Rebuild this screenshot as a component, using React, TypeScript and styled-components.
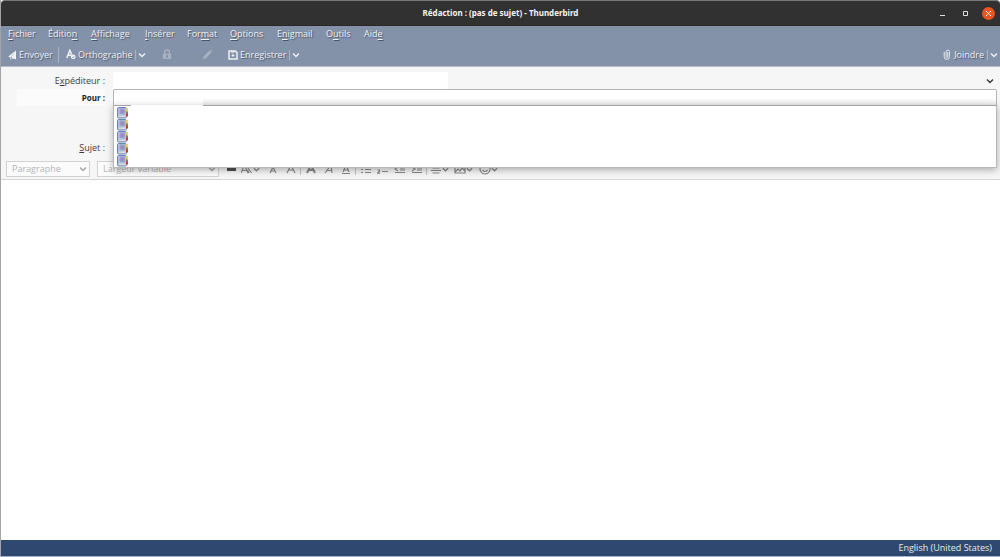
import React from "react";
import styled, { createGlobalStyle, css } from "styled-components";

const Global = createGlobalStyle`
  *, *::before, *::after { box-sizing: border-box; }
  body { margin: 0; background: #fff; }
  body, button, input, select, textarea {
    font-family: "Open Sans", "Noto Sans", sans-serif;
    font-size: 9px;
    line-height: 12px;
  }
  button { border: 0; padding: 0; background: none; color: inherit; }
  svg { display: block; flex: none; }
`;

const Window = styled.div`
  display: flex;
  flex-direction: column;
  min-height: 100vh;
  border-left: 1px solid #a4a4a8;
  border-bottom: 1px solid #a9b4c2;
  background: #fff;
`;

const TitleBar = styled.header`
  display: grid;
  grid-template-columns: 1fr auto 1fr;
  align-items: center;
  height: 26px;
  border-top: 1px solid #777775;
  border-bottom: 1px solid #292826;
  border-radius: 4px 4px 0 0;
  background: #323131;
  color: #f4f4f2;
`;

const Title = styled.h1`
  grid-column: 2;
  margin: 0;
  font-family: "Noto Sans", sans-serif;
  font-size: 8px;
  line-height: 12px;
  font-weight: 700;
`;

const WindowButtons = styled.div`
  display: flex;
  justify-content: flex-end;
  align-items: center;
  gap: 10px;
  padding-right: 5px;
`;

const WindowButton = styled.button<{ $close?: boolean }>`
  display: grid;
  place-items: center;
  width: 13px;
  height: 13px;
  border-radius: 50%;
  color: #dedede;
  ${(p) => p.$close && css`background: #e95420; color: #fff;`}
`;

const Chrome = styled.div`
  height: 41px;
  border-bottom: 1px solid #b9bcc4;
  background: #8391a9;
  color: #f0f1f4;
  text-shadow: 1px 1px 1px #4b5567;
`;

const MenuBar = styled.nav`
  display: flex;
  gap: 14px;
  height: 16px;
  padding-left: 7px;
`;

const MenuItem = styled.button<{ $width: number }>`
  width: ${(p) => p.$width}px;
  white-space: nowrap;
  text-align: left;
  text-shadow: inherit;
  u { text-underline-offset: 2px; }
`;

const ToolBar = styled.div`
  display: flex;
  align-items: center;
  height: 25px;
  padding: 0 2px 0 7px;
`;

const ToolButton = styled.button<{ $width?: number }>`
  display: flex;
  align-items: center;
  gap: 2px;
  height: 16px;
  width: ${(p) => (p.$width ? p.$width + "px" : "auto")};
  white-space: nowrap;
  text-shadow: inherit;
`;

const FadedTool = styled(ToolButton)`
  justify-content: center;
  color: #a9b2c2;
`;

const Divider = styled.span<{ $tall?: boolean }>`
  width: 1px;
  height: ${(p) => (p.$tall ? 16 : 10)}px;
  margin: 0 ${(p) => (p.$tall ? 7 : 2)}px 0 3px;
  background: #a9b3c4;
`;

const Spacer = styled.span`flex: 1;`;

const Headers = styled.form`
  display: grid;
  grid-template-columns: 104px 1fr;
  grid-template-rows: 17px 17px 33px 17px;
  column-gap: 8px;
  padding: 5px 3px 3px 0;
  background: #f6f6f6;
  color: #3c3c3c;
`;

const Label = styled.label<{ $active?: boolean }>`
  justify-self: end;
  display: flex;
  align-items: center;
  justify-content: flex-end;
  width: 88px;
  white-space: pre;
  ${(p) => p.$active && css`
    background: #fbfbfb;
    color: #222;
    font-size: 8px;
    font-weight: 700;
  `}
`;

const Sender = styled.div`
  display: flex;
  align-items: center;
  padding-right: 3px;
`;

const SenderSelect = styled.select`
  appearance: none;
  flex: none;
  width: 38%;
  height: 17px;
  border: 0;
  border-radius: 0;
  background: #fff;
`;

const Recipient = styled.div`
  position: relative;
  display: flex;
`;

const RecipientInput = styled.input`
  width: 100%;
  height: 17px;
  border: 1px solid #b4b4b4;
  border-radius: 2px;
  background: linear-gradient(#fff 50%, #ececec);
  outline: none;
`;

const Entered = styled.span`
  position: absolute;
  top: 3px;
  left: 1px;
  width: 89px;
  height: 13px;
  background: #fff;
`;

const Suggestions = styled.ul`
  position: absolute;
  z-index: 2;
  top: 16px;
  left: 0;
  right: 0;
  margin: 0;
  padding: 1px 3px 0;
  list-style: none;
  border: 1px solid #b8b8b8;
  border-top-color: #a4a4a4;
  background: #fff;
  box-shadow: 0 2px 7px rgba(0, 0, 0, 0.3);
  &::before {
    content: "";
    position: absolute;
    top: -1px;
    left: 17px;
    width: 72px;
    height: 1px;
    background: #fff;
  }
`;

const Suggestion = styled.li`
  height: 12px;
`;

const SubjectInput = styled.input`
  height: 17px;
  border: 1px solid #ccc;
  background: #fff;
`;

const FormatBar = styled.div`
  display: flex;
  align-items: center;
  height: 21px;
  padding-left: 5px;
  border-bottom: 1px solid #d6d6d6;
  background: #f6f6f6;
`;

const Picker = styled.div<{ $width: number }>`
  position: relative;
  display: flex;
  align-items: center;
  width: ${(p) => p.$width}px;
  margin-right: 7px;
  color: #a5a5a5;
  > svg { position: absolute; right: 3px; }
`;

const PickerSelect = styled.select`
  appearance: none;
  width: 100%;
  height: 16px;
  padding: 0 5px;
  border: 1px solid #d2d2d2;
  background: #fbfbfb;
  color: #b4b4b4;
  opacity: 1;
`;

const FormatButton = styled.button<{ $width: number }>`
  display: flex;
  justify-content: center;
  align-items: center;
  width: ${(p) => p.$width}px;
  height: 16px;
  color: #8a8a8a;
`;

const FormatDivider = styled.span`
  width: 1px;
  height: 12px;
  margin: 0 1px;
  background: #c4c4c4;
`;

const Editor = styled.textarea`
  flex: 1;
  width: 100%;
  border: 0;
  padding: 8px;
  resize: none;
  outline: none;
  background: #fff;
`;

const StatusBar = styled.footer`
  height: 16px;
  padding: 2px 8px 2px 0;
  background: #2f486f;
  color: #e8ebf0;
  text-align: right;
`;

const Chevron = ({ size = 8 }: { size?: number }) => (
  <svg width={size} height={size} viewBox="0 0 8 8" fill="none" stroke="currentColor" strokeWidth="1.5">
    <path d="M1 2.5 4 5.5 7 2.5" />
  </svg>
);

const SendIcon = () => (
  <svg width="9" height="10" viewBox="0 0 9 10" fill="currentColor">
    <path d="M8 .5.3 6.5l2.2 1.2L7 2.6 3.6 8.2 8 9.2ZM2.2 8v1.7L3.6 8.6Z" />
    <path d="M7.6 1.4 3.2 7.8l4.4 1Z" />
  </svg>
);

const SpellIcon = () => (
  <svg width="10" height="11" viewBox="0 0 10 11" fill="none" stroke="currentColor">
    <path d="M.8 9 3.8 1.3 5.8 5.6M2 6.3h3" strokeWidth="1.5" />
    <circle cx="7.2" cy="7.8" r="2.4" fill="currentColor" stroke="none" />
    <path d="m6 8 .9.9 1.6-2" stroke="#8391a9" strokeWidth=".7" />
  </svg>
);

const LockIcon = () => (
  <svg width="10" height="11" viewBox="0 0 10 11" fill="none" stroke="currentColor">
    <path d="M2.5 5V3.5a2.5 2.5 0 0 1 5 0V5" strokeWidth="1.3" />
    <path d="M.8 4.7h8.4V10H.8Z" fill="currentColor" stroke="none" />
    <path d="M5 6.2v2.4" stroke="#76839a" strokeWidth="1.6" />
  </svg>
);

const PencilIcon = () => (
  <svg width="11" height="11" viewBox="0 0 11 11" fill="currentColor">
    <path d="m.8 10.2.8-2.7L7.5 1.6l1.9 1.9-5.9 5.9ZM8.1 1 8.8.4l1.8 1.8-.6.7Z" />
  </svg>
);

const SaveIcon = () => (
  <svg width="10" height="10" viewBox="0 0 10 10" fill="none" stroke="currentColor">
    <path d="M1 1h6.4L9 2.6V9H1Z" strokeWidth="1.5" />
    <path d="M3 1.8h3.5" strokeWidth="1.4" />
    <path d="M3.2 5h3.6L5 7Z" fill="currentColor" stroke="none" />
    <path d="M5 3.6v2" />
  </svg>
);

const ClipIcon = () => (
  <svg width="9" height="11" viewBox="0 0 9 11" fill="none" stroke="currentColor" strokeWidth=".9">
    <path d="M1.2 2.8v5a2.6 2.6 0 0 0 5.2 0V2.3a1.7 1.7 0 0 0-3.3 0v5.4a.8.8 0 0 0 1.6 0V3" />
  </svg>
);

const BookIcon = () => (
  <svg width="11" height="12" viewBox="0 0 11 12">
    <rect x=".5" y=".5" width="9" height="10.5" rx="1.2" fill="#b3c0de" stroke="#6d83af" />
    <rect x="2.6" y="1.4" width="5.4" height="5.8" rx="1" fill="#9b9ccb" />
    <circle cx="5.4" cy="4.2" r="1.5" fill="#a985b5" />
    <path d="M1.8 8.6h7v1.5h-7Z" fill="#dcdcdc" />
    <path d="M9 1.2h2v3.2H9Z" fill="#e4d34a" />
    <path d="M9 4.4h2v1.8H9Z" fill="#7d8a45" />
    <path d="M9 6.2h2v3.4H9Z" fill="#c93a3c" />
  </svg>
);

const formatPaths: Record<string, string> = {
  size: "M0 10 3.5 2 7 10M1.5 7.5h4M7 5l3.5 5M8 10 6.5 7",
  smaller: "M3 10 6 4l3 6M4 8h4",
  larger: "M2 10 6 2l4 8M3.5 7h5",
  italic: "M2 10 8 2l1 8M4 7.5h5",
  underline: "M3 9 6 2l3 7M4 7h4M2 10.5h8",
  bullets: "M1 3.5h2M1 6.5h2M1 9.5h2M5 3.5h6M5 6.5h6M5 9.5h6",
  numbers: "M2 1v3M.5 7h2v1.2L.5 10.2h2.5M5 3h6M5 8.5h6",
  outdent: "M1 2h10M6 5h5M6 7h5M1 9.5h10M4 4 1 6l3 2",
  indent: "M1 2h10M6 5h5M6 7h5M1 9.5h10M1 4l3 2-3 2",
  align: "M1 2.5h10M2.5 5h7M1 7.5h10M2.5 10h7",
  image: "M1 2h10v8H1ZM1 9l3-3 2 2 2-3 3 3",
  smile: "M6 1a5 5 0 1 0 .1 0ZM4 4v1M8 4v1M3.5 7Q6 10 8.5 7",
};

const FormatIcon = ({ name, bold }: { name: string; bold?: boolean }) => (
  <svg width="12" height="12" viewBox="0 0 12 12" fill="none" stroke="currentColor" strokeWidth={bold ? 2 : 1.2}>
    <path d={formatPaths[name]} />
  </svg>
);

const menus: [string, string, string, number][] = [
  ["", "F", "ichier", 26], ["Éditio", "n", "", 29], ["", "A", "ffichage", 40],
  ["", "I", "nsérer", 28], ["For", "m", "at", 29], ["", "O", "ptions", 33],
  ["E", "n", "igmail", 35], ["O", "u", "tils", 24], ["Aid", "e", "", 20],
];

const formats: { icon: string; label: string; width: number; menu?: boolean; bold?: boolean; rule?: boolean }[] = [
  { icon: "size", label: "Taille", width: 28, menu: true },
  { icon: "smaller", label: "Réduire la taille", width: 18 },
  { icon: "larger", label: "Augmenter la taille", width: 17, rule: true },
  { icon: "larger", label: "Gras", width: 18, bold: true },
  { icon: "italic", label: "Italique", width: 17 },
  { icon: "underline", label: "Souligné", width: 17, rule: true },
  { icon: "bullets", label: "Liste à puces", width: 17 },
  { icon: "numbers", label: "Liste numérotée", width: 17 },
  { icon: "outdent", label: "Diminuer le retrait", width: 17 },
  { icon: "indent", label: "Augmenter le retrait", width: 17, rule: true },
  { icon: "align", label: "Alignement", width: 23, menu: true },
  { icon: "image", label: "Image", width: 25, menu: true },
  { icon: "smile", label: "Émoticône", width: 25, menu: true },
];

export default function App() {
  return (
    <>
      <Global />
      <Window>
        <TitleBar>
          <Title>Rédaction : (pas de sujet) - Thunderbird</Title>
          <WindowButtons>
            <WindowButton aria-label="Réduire">
              <svg width="7" height="7" viewBox="0 0 7 7" stroke="currentColor"><path d="M1 5.5h5" /></svg>
            </WindowButton>
            <WindowButton aria-label="Agrandir">
              <svg width="7" height="7" viewBox="0 0 7 7" fill="none" stroke="currentColor"><path d="M1.5 1.5h4v4h-4Z" /></svg>
            </WindowButton>
            <WindowButton $close aria-label="Fermer">
              <svg width="7" height="7" viewBox="0 0 7 7" stroke="currentColor"><path d="m1 1 5 5M6 1 1 6" /></svg>
            </WindowButton>
          </WindowButtons>
        </TitleBar>

        <Chrome>
          <MenuBar>
            {menus.map(([before, key, after, width]) => (
              <MenuItem key={before + key + after} $width={width}>{before}<u>{key}</u>{after}</MenuItem>
            ))}
          </MenuBar>
          <ToolBar>
            <ToolButton $width={47}><SendIcon />Envoyer</ToolButton>
            <Divider $tall />
            <ToolButton $width={66}><SpellIcon />Orthographe</ToolButton>
            <Divider />
            <ToolButton aria-label="Langues"><Chevron /></ToolButton>
            <FadedTool $width={41} aria-label="Chiffrer"><LockIcon /></FadedTool>
            <FadedTool $width={41} aria-label="Signer"><PencilIcon /></FadedTool>
            <ToolButton $width={58}><SaveIcon />Enregistrer</ToolButton>
            <Divider />
            <ToolButton aria-label="Options d’enregistrement"><Chevron /></ToolButton>
            <Spacer />
            <ToolButton><ClipIcon />Joindre</ToolButton>
            <Divider />
            <ToolButton aria-label="Options de pièce jointe"><Chevron /></ToolButton>
          </ToolBar>
        </Chrome>

        <Headers onSubmit={(e) => e.preventDefault()}>
          <Label htmlFor="from"><span>E<u>x</u>péditeur :</span></Label>
          <Sender>
            <SenderSelect id="from" />
            <Spacer />
            <Chevron />
          </Sender>
          <Label htmlFor="to" $active>Pour :</Label>
          <Recipient>
            <RecipientInput id="to" />
            <Entered />
            <Suggestions>
              {[0, 1, 2, 3, 4].map((n) => <Suggestion key={n}><BookIcon /></Suggestion>)}
            </Suggestions>
          </Recipient>
          <span /><span />
          <Label htmlFor="subject"><span><u>S</u>ujet :</span></Label>
          <SubjectInput id="subject" />
        </Headers>

        <FormatBar>
          <Picker $width={84}>
            <PickerSelect aria-label="Style" disabled><option>Paragraphe</option></PickerSelect>
            <Chevron />
          </Picker>
          <Picker $width={122}>
            <PickerSelect aria-label="Police" disabled><option>Largeur variable</option></PickerSelect>
            <Chevron />
          </Picker>
          <FormatButton $width={10} aria-label="Couleur">
            <svg width="9" height="8" viewBox="0 0 9 8"><path d="M0 1h9v5H0Z" fill="#505050" /></svg>
          </FormatButton>
          {formats.map((f) => (
            <React.Fragment key={f.label}>
              <FormatButton $width={f.width} aria-label={f.label}>
                <FormatIcon name={f.icon} bold={f.bold} />
                {f.menu && <Chevron size={7} />}
              </FormatButton>
              {f.rule && <FormatDivider />}
            </React.Fragment>
          ))}
        </FormatBar>

        <Editor aria-label="Corps du message" />
        <StatusBar>English (United States)</StatusBar>
      </Window>
    </>
  );
}
